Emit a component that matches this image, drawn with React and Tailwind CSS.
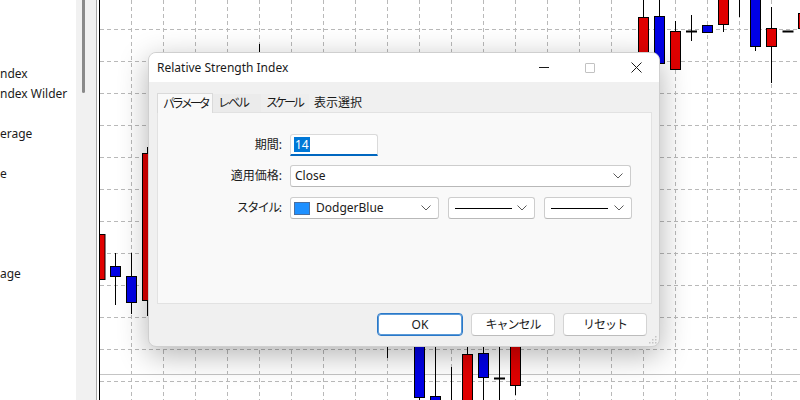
import React from "react";

const FONT = { fontFamily: '"Noto Sans", "Noto Sans CJK JP", sans-serif' };

const navItems = [
  "ndex",
  "ndex Wilder",
  "",
  "erage",
  "",
  "e",
  "",
  "",
  "",
  "",
  "age",
];

// x, wick, body, doji
const candles = [
  { x: 100, b: [234, 279], c: "r" },
  { x: 115.5, w: [253, 305], b: [266, 276], c: "b" },
  { x: 131.5, w: [253, 314], b: [276, 302], c: "b" },
  { x: 147.5, w: [147, 316], b: [153, 300], c: "r" },
  { x: 259.5, w: [44, 60] },
  { x: 643.5, w: [-5, 17], b: [17, 70], c: "r" },
  { x: 659.5, w: [-5, 16], b: [16, 63], c: "b" },
  { x: 675.5, w: [21, 31], b: [31, 69], c: "r" },
  { x: 691.5, w: [15, 41], d: 31 },
  { x: 707.5, b: [25, 32], c: "b" },
  { x: 723.5, w: [-5, 32], b: [-5, 24], c: "r" },
  { x: 739.5, w: [-5, 17] },
  { x: 755.5, w: [-5, 51], b: [-5, 46], c: "b" },
  { x: 771.5, w: [7, 83], b: [28, 46], c: "r" },
  { x: 788, d: 31 },
  { x: 803.5, b: [13, 28], c: "r" },
  { x: 387.5, w: [330, 358] },
  { x: 419.5, w: [330, 405], b: [330, 397], c: "b" },
  { x: 435.5, w: [330, 405], b: [396, 410], c: "b" },
  { x: 451.5, w: [367, 405] },
  { x: 467.5, w: [330, 354], b: [354, 410], c: "r" },
  { x: 483.5, w: [330, 405], b: [353, 377], c: "b" },
  { x: 499.5, w: [330, 405], d: 378 },
  { x: 515.5, w: [330, 395], b: [330, 385], c: "r" },
];

function Chart() {
  const vx = [];
  for (let x = 131; x < 800; x += 32) vx.push(x + 0.5);
  const hy = [];
  for (let y = 29; y < 400; y += 32) hy.push(y + 0.5);
  return (
    <svg width="700" height="400" viewBox="100 0 700 400" className="block">
      <rect x="100" y="0" width="700" height="400" fill="#ffffff" />
      {vx.map((x) => (
        <line key={"v" + x} x1={x} y1="0" x2={x} y2="400" stroke="#b9b9b9" strokeDasharray="4 3" />
      ))}
      {hy.map((y) => (
        <line key={"h" + y} x1="100" y1={y} x2="800" y2={y} stroke="#b9b9b9" strokeDasharray="4 3" />
      ))}
      <line x1="100" y1="374.5" x2="800" y2="374.5" stroke="#c4c4c4" />
      {candles.map((k, i) => (
        <g key={i}>
          {k.w && <line x1={k.x} y1={k.w[0]} x2={k.x} y2={k.w[1]} stroke="#000" />}
          {k.b && (
            <rect
              x={k.x - 5}
              y={k.b[0] + 0.5}
              width="10"
              height={k.b[1] - k.b[0]}
              fill={k.c === "r" ? "#e00000" : "#0000e6"}
              stroke="#000"
            />
          )}
          {k.d !== undefined && (
            <line x1={k.x - 5.5} y1={k.d + 0.5} x2={k.x + 5.5} y2={k.d + 0.5} stroke="#000" strokeWidth="2" />
          )}
        </g>
      ))}
    </svg>
  );
}

function Chevron() {
  return (
    <svg width="10" height="6" viewBox="0 0 10 6" className="shrink-0">
      <path d="M0.5 0.5 L5 5 L9.5 0.5" fill="none" stroke="#5a5a5a" strokeWidth="1" />
    </svg>
  );
}

function Select({ className, children }) {
  return (
    <div
      className={
        "h-[22px] flex items-center bg-white border border-[#cdcdcd] border-b-[#b8b8b8] rounded-[3px] pr-[7px] " +
        className
      }
    >
      <div className="flex-1 flex items-center min-w-0">{children}</div>
      <Chevron />
    </div>
  );
}

function Label({ children }) {
  return (
    <div className="w-[125px] text-right pr-[1px] text-[12px] text-[#1a1a1a] shrink-0 whitespace-nowrap">
      {children}
    </div>
  );
}

export default function App() {
  return (
    <div className="relative w-[800px] h-[400px] overflow-hidden bg-white flex" style={FONT}>
      {/* navigator */}
      <div className="w-[76px] bg-white flex flex-col pt-[64px] overflow-hidden">
        {navItems.map((t, i) => (
          <div key={i} className="h-[20px] flex items-center text-[12px] text-[#1b1b1b] whitespace-nowrap">
            {t}
          </div>
        ))}
      </div>
      <div className="w-[20px] bg-[#f1f1f1] pl-[6px]">
        <div className="w-[3px] h-[93px] bg-[#8a8a8a] rounded-b-full" />
      </div>
      <div className="w-[1px] bg-[#a8a8a8]" />
      <div className="w-[2px] bg-white" />
      <div className="w-[1px] bg-black" />
      <div className="flex-1">
        <Chart />
      </div>

      {/* dialog */}
      <div className="absolute left-[148px] top-[52px] w-[512px] h-[295px] rounded-[8px] bg-[#f0f0f0] border border-[#cfcfcf] shadow-[0_8px_30px_rgba(0,0,0,0.3)] overflow-hidden flex flex-col">
        <div className="h-[29px] bg-white flex items-center shrink-0">
          <div className="flex-1 pl-[8px] text-[12px] text-[#1a1a1a]">Relative Strength Index</div>
          <div className="w-[46px] h-full flex items-center justify-center">
            <div className="w-[10px] h-[1px] bg-[#1a1a1a]" />
          </div>
          <div className="w-[46px] h-full flex items-center justify-center">
            <div className="w-[10px] h-[10px] border border-[#c2c2c2] rounded-[1px]" />
          </div>
          <div className="w-[46px] h-full flex items-center justify-center">
            <svg width="11" height="11" viewBox="0 0 11 11">
              <path d="M0.5 0.5 L10.5 10.5 M10.5 0.5 L0.5 10.5" stroke="#1a1a1a" strokeWidth="1" />
            </svg>
          </div>
        </div>

        <div className="flex-1 flex flex-col pl-[8px] pr-[7px] pt-[10px] relative">
          {/* tabs */}
          <div className="h-[20px] flex items-end text-[12px] text-[#1a1a1a] whitespace-nowrap">
            <div className="w-[56px] h-[20px] bg-[#f9f9f9] border border-b-0 border-[#dadada] pl-[5px] flex items-center relative z-10 -mb-[1px] tracking-[-3px]">
              パラメータ
            </div>
            <div className="w-[48px] h-[18px] bg-[#ebebeb] pl-[5px] flex items-center tracking-[-2px]">レベル</div>
            <div className="w-[48px] h-[18px] bg-[#eeeeee] pl-[5px] flex items-center tracking-[-3px]">スケール</div>
            <div className="h-[18px] pl-[5px] flex items-center">表示選択</div>
          </div>

          {/* panel */}
          <div className="h-[192px] bg-[#f9f9f9] border border-[#e2e2e2] flex flex-col pt-[21px] text-[12px] text-[#1a1a1a]">
            <div className="flex items-center h-[22px]">
              <Label>期間:</Label>
              <div className="ml-[7px] w-[88px] h-[22px] bg-white border border-[#dadada] border-b-2 border-b-[#0067c0] rounded-t-[3px] flex items-center pl-[3px]">
                <span className="bg-[#0078d7] text-white px-[1px] leading-[15px]">14</span>
              </div>
            </div>
            <div className="flex items-center h-[22px] mt-[9px]">
              <Label>適用価格:</Label>
              <Select className="ml-[7px] w-[341px] pl-[4px]">
                <span>Close</span>
              </Select>
            </div>
            <div className="flex items-center h-[22px] mt-[10px]">
              <Label>
                <span className="tracking-[-1.5px]">スタイル</span>:
              </Label>
              <Select className="ml-[7px] w-[149px] pl-[3px]">
                <div className="w-[16px] h-[13px] bg-[#1e90ff] border border-[#4a6fa0]" />
                <span className="ml-[6px]">DodgerBlue</span>
              </Select>
              <Select className="ml-[9px] w-[87px] pl-[6px]">
                <div className="w-[57px] h-[1px] bg-black" />
              </Select>
              <Select className="ml-[9px] w-[88px] pl-[6px]">
                <div className="w-[57px] h-[1px] bg-black" />
              </Select>
            </div>
          </div>

          {/* buttons */}
          <div className="flex justify-end gap-[8px] pr-[5px] mt-[9px] text-[12px] text-[#1a1a1a]">
            <div className="w-[86px] h-[23px] bg-white border border-[#2a78c8] rounded-[4px] shadow-[inset_0_0_0_1px_#5a9ad8] flex items-center justify-center">
              OK
            </div>
            <div className="w-[84px] h-[23px] bg-white border border-[#d4d4d4] border-b-[#bcbcbc] rounded-[4px] flex items-center justify-center tracking-[-1px]">
              キャンセル
            </div>
            <div className="w-[84px] h-[23px] bg-white border border-[#d4d4d4] border-b-[#bcbcbc] rounded-[4px] flex items-center justify-center tracking-[-1px]">
              リセット
            </div>
          </div>

          <svg width="8" height="8" viewBox="0 0 8 8" className="absolute right-[2px] bottom-[2px]">
            <rect x="6" y="0" width="1.5" height="1.5" fill="#c4c4c4" />
            <rect x="3" y="3" width="1.5" height="1.5" fill="#c4c4c4" />
            <rect x="6" y="3" width="1.5" height="1.5" fill="#c4c4c4" />
            <rect x="0" y="6" width="1.5" height="1.5" fill="#c4c4c4" />
            <rect x="3" y="6" width="1.5" height="1.5" fill="#c4c4c4" />
            <rect x="6" y="6" width="1.5" height="1.5" fill="#c4c4c4" />
          </svg>
        </div>
      </div>
    </div>
  );
}
